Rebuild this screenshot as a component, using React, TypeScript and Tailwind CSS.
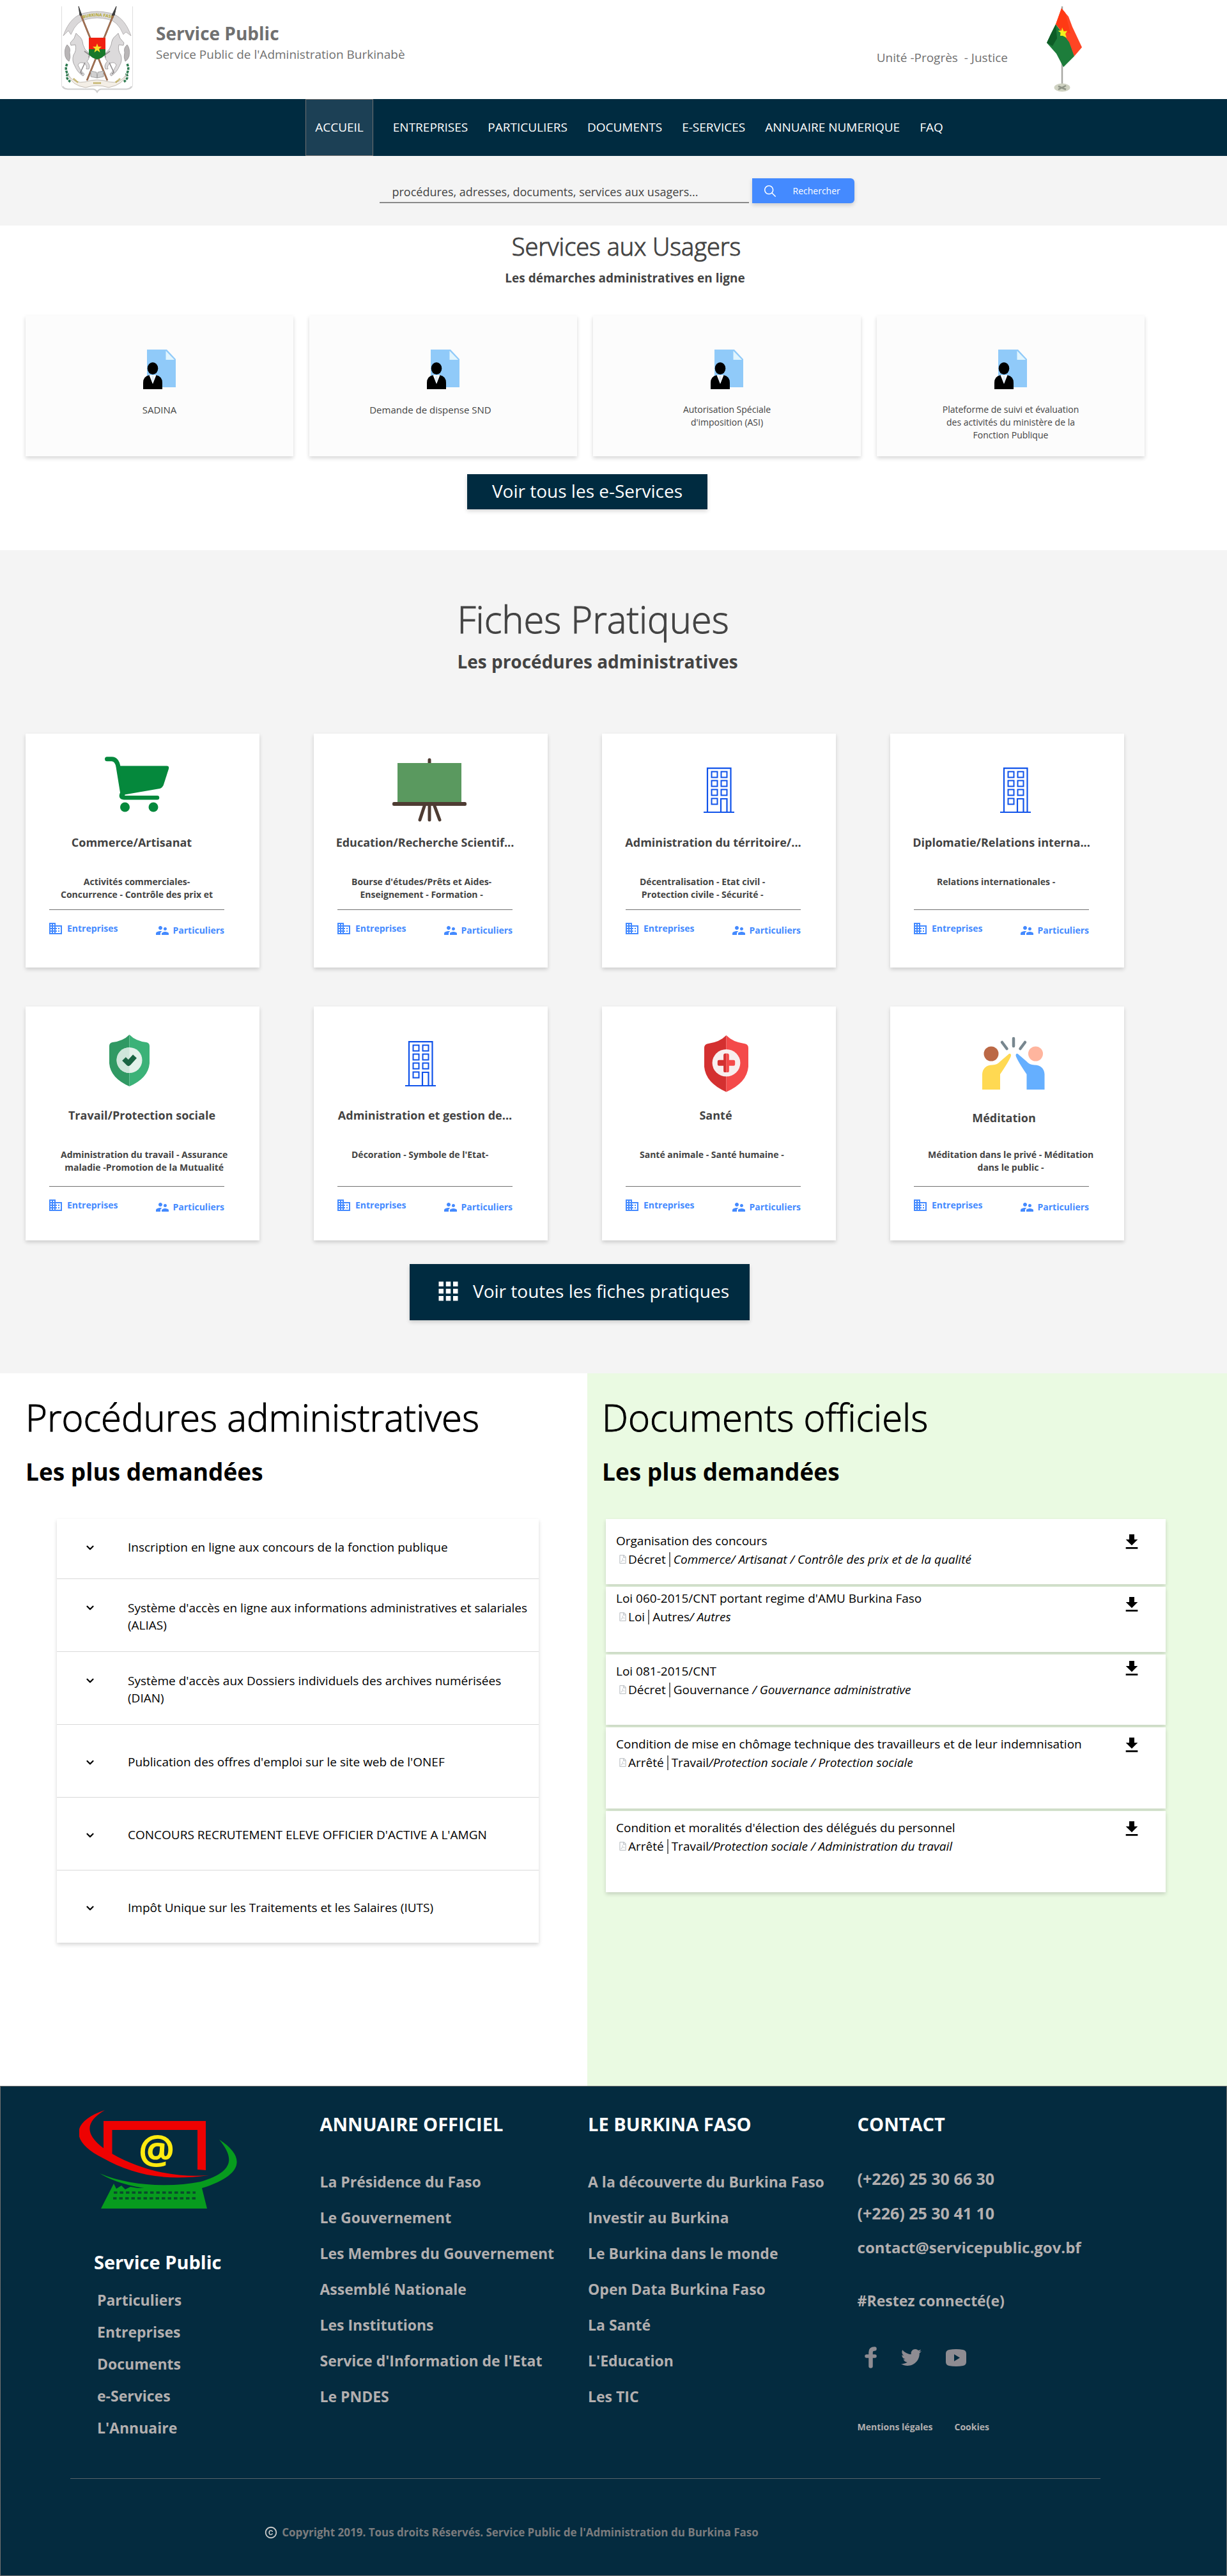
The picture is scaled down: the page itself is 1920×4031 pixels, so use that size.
import React from "react";
import { MdApps, MdBusiness, MdCopyright, MdFileDownload, MdSupervisorAccount } from "react-icons/md";
import { IoIosSearch } from "react-icons/io";
import { FaRegFilePdf, FaTwitter } from "react-icons/fa";
import { ChevronDown } from "lucide-react";

function Emblem() {
  const horse = (
    <g fill="#dcdadb" stroke="#8d8a8b" strokeWidth="0.7">
      <path d="M23 42 L27 46 Q33 50 34 60 Q36 68 42 72 Q46 80 40 86 Q46 92 43 98 L39 98 Q41 93 36 89 Q28 86 26 92 Q29 100 36 106 L34 109 Q25 103 21 93 Q16 85 19 76 Q24 69 22 60 L15 61 L14 57 L20 50 Z" />
      <path d="M37 88 L30 103 L33 106 M36 70 L44 76 L43 80" fill="none" strokeWidth="1.6" />
      <path d="M9 60 Q4 66 6 78 Q8 84 12 86 Q15 80 13 72 Q15 65 9 60 Z" fill="#b9b6b7" />
    </g>
  );
  return (
    <svg className="h-[136px] w-[112px] shrink-0" viewBox="0 0 112 136" role="img" aria-label="Armoiries du Burkina Faso">
      <path d="M0.500 0 V124 Q1 129 8 129.500 H50 Q54 130 56 135 Q58 130 62 129.500 H104 Q111 129 111.500 124 V0" fill="#fff" stroke="#dedede" />
      <path d="M2 125 Q4 129 10 129.500 H50 Q54 130 56 134 Q58 130 62 129.500 H102 Q108 129 110 125" fill="none" stroke="#cfcfcf" strokeWidth="2" />
      <path d="M3 46 Q14 14 38 10 Q56 6 74 10 Q98 14 109 46 L101 40 L97 44 Q88 22 72 20 Q56 16 40 20 Q24 22 15 44 L11 38 Z" fill="#dad8d9" stroke="#a9a6a7" strokeWidth="0.800" />
      <path id="motto" d="M34 19 Q56 12 80 19" fill="none" />
      <text fontSize="6.500" fontWeight="700" fill="#b5a82a" fontFamily="Open Sans, sans-serif">
        <textPath href="#motto">BURKINA FASO</textPath>
      </text>
      {horse}
      <g transform="translate(112 0) scale(-1 1)">{horse}</g>
      <path d="M30 12 L72 116 M82 12 L40 116" stroke="#7c4a2c" strokeWidth="2.600" />
      <path d="M30 12 L72 116 M82 12 L40 116" stroke="#d9a98a" strokeWidth="0.700" />
      <path d="M27 0 L32 14 L29 14 Z M86 0 L83 14 L79 14 Z" fill="#3c3c3c" stroke="#3c3c3c" />
      <path d="M43 49 H69 V67 H43 Z" fill="#f02010" />
      <path d="M43 67 H69 V75 Q66 80 56 83 Q46 80 43 75 Z" fill="#17782a" />
      <path d="M56 58 L57.800 63 L63 63 L59 66.500 L60.500 72 L56 68.800 L51.500 72 L53 66.500 L49 63 L54.200 63 Z" fill="#f6e02a" />
      <path d="M46 101 L55 103 L56 112 L46 110 Z M66 101 L57 103 L56 112 L66 110 Z" fill="#d0d0d0" stroke="#888" strokeWidth="0.700" />
      <path d="M9 90 Q5 98 10 106 Q6 112 14 118 M103 90 Q107 98 102 106 Q106 112 98 118" fill="none" stroke="#2d7a4f" strokeWidth="3.500" strokeDasharray="4 1.500" />
      <path d="M10 106 Q20 122 38 118 Q56 112 74 118 Q92 122 102 106 Q98 122 74 127 Q56 121 38 127 Q16 124 10 106 Z" fill="#f3eee6" stroke="#b6afa6" strokeWidth="0.800" />
      <path d="M19 113 L26 119 M50 120 H62 M85 119 L92 113" stroke="#b5a040" strokeWidth="2.400" strokeDasharray="1.500 0.600" />
    </svg>
  );
}

function Flag() {
  return (
    <svg className="h-[134px] w-[56px] shrink-0" viewBox="0 0 56 134" role="img" aria-label="Drapeau du Burkina Faso">
      <path d="M25 0 V128" stroke="#a8a8a4" strokeWidth="2.500" />
      <path d="M24 3 L35 16 L41 32 L56 64 L44 78 L27 44 L15 28 Z" fill="#ff4524" />
      <path d="M24 3 L30 10 L38 42 L27 40 L15 28 Z" fill="#ff3a14" />
      <path d="M15 28 L27 44 L36 56 L44 78 L27 95 L16 74 L1 57 L7 44 Z" fill="#1d7d3b" />
      <path d="M15 28 L17 50 L10 62 L1 57 L7 44 Z" fill="#0d5c26" />
      <path d="M25 33 L27.500 39 L33 38.500 L30 43 L32 49 L26 46 L22 46 L22.500 41 L18.500 38 L24 38 Z" fill="#f4f01c" />
      <ellipse cx="25" cy="127" rx="12.500" ry="6.500" fill="#cfd2c2" />
      <path d="M19 125 L31 130 M19 130 L31 124" stroke="#8f9487" strokeWidth="2.500" />
    </svg>
  );
}

function ServiceIcon() {
  return (
    <svg className="h-[62px] w-[51px]" viewBox="0 0 51 62" aria-hidden="true">
      <path d="M6 0 H37 L51 15 V59 H6 Z" fill="#90caf9" />
      <path d="M35.500 2 L49 16 H35.500 Z" fill="#e1f5fe" />
      <path d="M8 40 H22 L15 54 Z" fill="#fff" />
      <ellipse cx="15" cy="29.500" rx="8.300" ry="9.500" />
      <path d="M9.500 40 L15 54 L20.500 40 Q30 42 30 52 V62 H0 V52 Q0 42 9.500 40 Z" />
      <path d="M13.500 41 H16.500 L17 47 L15 51 L13 47 Z" fill="#dbe9f5" />
    </svg>
  );
}

const building = (
  <g fill="none" stroke="#0f52ea" strokeWidth="2.200">
    <path d="M0 70 H48 M6 70 V1.200 H42.500 V70 M27 70 V49 H36.500 V70" />
    <path d="M12.500 6.500 h9 v9 h-9 Z M27.500 6.500 h9 v9 h-9 Z M12.500 20.500 h9 v9 h-9 Z M27.500 20.500 h9 v9 h-9 Z M12.500 34.500 h9 v9 h-9 Z M27.500 34.500 h9 v9 h-9 Z M12.500 48.500 h9 v9 h-9 Z" strokeWidth="2" />
  </g>
);

const shieldLeft = "M31.500 0 Q22 10 5 12 Q0 13 0 18 V45 Q2 68 31.500 81 Z";
const shieldRight = "M31.500 0 Q41 10 58 12 Q63 13 63 18 V45 Q61 68 31.500 81 Z";

const ficheIcons: Record<string, React.ReactNode> = {
  cart: (
    <g fill="#05883c">
      <path d="M23.500 7.800 H31 Q39 8 41 20 L48 63" fill="none" stroke="#05883c" strokeWidth="7" strokeLinecap="round" />
      <path d="M42 18.500 H117 Q121 18.500 120 23 L112 48 Q110 53 106 54 L48 64 Z" />
      <path d="M48 60 Q43 68 50 68.200 H102" fill="none" stroke="#05883c" strokeWidth="6.500" strokeLinecap="round" />
      <circle cx="51.500" cy="83" r="7.500" />
      <circle cx="96" cy="83" r="7.500" />
    </g>
  ),
  board: (
    <g>
      <path d="M77 9 V20 M69.500 80 L62 103 M77 80 V103 M84.500 80 L93 103" stroke="#4e3c33" strokeWidth="5" strokeLinecap="round" />
      <path d="M27 14 H127 V76 H27 Z" fill="#5a995f" />
      <rect x="19" y="75" width="116" height="6" rx="2.500" fill="#4e3c33" />
    </g>
  ),
  admin: <g transform="translate(55 21)">{building}</g>,
  diplomacy: <g transform="translate(68 21)">{building}</g>,
  management: <g transform="translate(39 22)">{building}</g>,
  work: (
    <g transform="translate(27 12)">
      <path d={shieldLeft} fill="#309963" />
      <path d={shieldRight} fill="#3bb278" />
      <circle cx="31.500" cy="40" r="20" fill="#e3f1ea" />
      <path d="M31.500 20 A20 20 0 0 0 31.500 60 Z" fill="#cfe6da" />
      <path d="M23 38 L30 45 L40 34" fill="none" stroke="#1a6442" strokeWidth="8" strokeLinejoin="round" />
    </g>
  ),
  health: (
    <g transform="translate(56 13) scale(1.095)">
      <path d={shieldLeft} fill="#d43030" />
      <path d={shieldRight} fill="#f44a4a" />
      <ellipse cx="31.500" cy="39.500" rx="20" ry="19.500" fill="#f8eeee" />
      <path d="M31.500 26 V53 H29 Q27.500 53 27.500 51 V43.500 H21 Q19 43.500 19 41.500 V37.500 Q19 35.500 21 35.500 H27.500 V29 Q27.500 26 30 26 Z" fill="#d43030" />
      <path d="M31.500 26 V53 H34 Q35.500 53 35.500 51 V43.500 H42 Q44 43.500 44 41.500 V37.500 Q44 35.500 42 35.500 H35.500 V29 Q35.500 26 33 26 Z" fill="#f44a4a" />
    </g>
  ),
  mediation: (
    <g>
      <path d="M89 18 V30 M71 24 L78.500 34 M107 24 L99.500 34" stroke="#78878f" strokeWidth="4.500" strokeLinecap="round" />
      <circle cx="54" cy="42" r="11.500" fill="#bb6845" />
      <circle cx="123.500" cy="42" r="11.500" fill="#ffb59e" />
      <path d="M40 98 V74 Q41 60 56 59.500 Q64 59 68 54 L82 42 Q85 41 85 45 Q83 52 68 74 V98 Z" fill="#ffd952" />
      <path d="M137.500 98 V74 Q136.500 60 121.500 59.500 Q113.500 59 109.500 54 L95.500 42 Q92.500 41 92.500 45 Q94.500 52 109.500 74 V98 Z" fill="#65afff" />
    </g>
  ),
};

function FooterLogo() {
  return (
    <svg className="ml-[123px] h-[154px] w-[249px]" viewBox="0 0 249 154" role="img" aria-label="Service Public en ligne">
      <path d="M38 17 H198 V94 L185 93 V31 H51.500 V72 L38 62 Z" fill="#ee0202" />
      <path d="M40 0 C-14 18 -14 50 37 75 C82 100 130 112 203 102 C150 106 96 94 51 68 C8 42 6 20 40 0 Z" fill="#ee0202" />
      <path d="M219 46 C262 74 256 102 192 122 C130 130 70 122 32 99 C76 118 140 122 190 112 C244 96 242 74 219 46 Z" fill="#079b1e" />
      <path d="M54 115 L58 123 L66 118 L72 124 L80 120 L92 122 H192 L200 154 H34 Z" fill="#079b1e" />
      <path d="M54 129 H182 M53 138 H182" stroke="#0a4a2c" strokeWidth="3.500" strokeDasharray="5.500 4" />
      <text x="121" y="84" textAnchor="middle" fontSize="63" fontWeight="700" fontFamily="Open Sans, sans-serif" fill="#fdea10">@</text>
    </svg>
  );
}

const services = [
  { label: ["SADINA"], cls: "text-[15px]" },
  { label: ["Demande de dispense SND"], cls: "pr-10 text-[15px]" },
  { label: ["Autorisation Spéciale", "d'imposition (ASI)"], cls: "text-[14px]" },
  { label: ["Plateforme de suivi et évaluation", "des activités du ministère de la", "Fonction Publique"], cls: "text-[14px]" },
];

const fiches = [
  { icon: "cart", title: "Commerce/Artisanat", t: "pr-4", d: "ml-[18px]", lines: ["Activités commerciales-", "Concurrence - Contrôle des prix et"] },
  { icon: "board", title: "Education/Recherche Scientif...", t: "", d: "ml-[22px]", lines: ["Bourse d'études/Prêts et Aides-", "Enseignement - Formation -"] },
  { icon: "admin", title: "Administration du térritoire/...", t: "", d: "ml-[22px]", lines: ["Décentralisation - Etat civil -", "Protection civile - Sécurité -"] },
  { icon: "diplomacy", title: "Diplomatie/Relations interna...", t: "", d: "ml-9", lines: ["Relations internationales -"] },
  { icon: "work", title: "Travail/Protection sociale", t: "pl-4", d: "ml-[18px]", lines: ["Administration du travail - Assurance", "maladie -Promotion de la Mutualité"] },
  { icon: "management", title: "Administration et gestion de...", t: "", d: "ml-[22px]", lines: ["Décoration - Symbole de l'Etat-"] },
  { icon: "health", title: "Santé", t: "pl-2", d: "ml-[22px]", lines: ["Santé animale - Santé humaine -"] },
  { icon: "mediation", title: "Méditation", t: "pt-1 pl-2", d: "ml-[22px]", lines: ["Méditation dans le privé - Méditation", "dans le public -"] },
];

const procedures = [
  "Inscription en ligne aux concours de la fonction publique",
  "Système d'accès en ligne aux informations administratives et salariales (ALIAS)",
  "Système d'accès aux Dossiers individuels des archives numérisées (DIAN)",
  "Publication des offres d'emploi sur le site web de l'ONEF",
  "CONCOURS RECRUTEMENT ELEVE OFFICIER D'ACTIVE A L'AMGN",
  "Impôt Unique sur les Traitements et les Salaires (IUTS)",
];

const documents = [
  { title: "Organisation des concours", kind: "Décret", plain: "", it: "Commerce/ Artisanat / Contrôle des prix et de la qualité", box: "h-[102px]", text: "pt-5", dl: "pt-5" },
  { title: "Loi 060-2015/CNT portant regime d'AMU Burkina Faso", kind: "Loi", plain: "Autres", it: "/ Autres", box: "h-[102px]", text: "pt-1", dl: "pt-3" },
  { title: "Loi 081-2015/CNT", kind: "Décret", plain: "Gouvernance ", it: "/ Gouvernance administrative", box: "h-[110px]", text: "pt-3", dl: "pt-1.5" },
  { title: "Condition de mise en chômage technique des travailleurs et de leur indemnisation", kind: "Arrêté", plain: "Travail", it: "/Protection sociale / Protection sociale", box: "h-[127px]", text: "pt-3", dl: "pt-3" },
  { title: "Condition et moralités d'élection des délégués du personnel", kind: "Arrêté", plain: "Travail", it: "/Protection sociale / Administration du travail", box: "h-[127px]", text: "pt-3", dl: "pt-3" },
];

const annuaire = ["La Présidence du Faso", "Le Gouvernement", "Les Membres du Gouvernement", "Assemblé Nationale", "Les Institutions", "Service d'Information de l'Etat", "Le PNDES"];
const burkina = ["A la découverte du Burkina Faso", "Investir au Burkina", "Le Burkina dans le monde", "Open Data Burkina Faso", "La Santé", "L'Education", "Les TIC"];
const nav = ["ENTREPRISES", "PARTICULIERS", "DOCUMENTS", "E-SERVICES", "ANNUAIRE NUMERIQUE", "FAQ"];

function FooterLinks({ title, items }: { title: string; items: string[] }) {
  return (
    <nav aria-label={title} className="pt-[39px]">
      <h2 className="text-[29px] leading-10 font-bold text-white">{title}</h2>
      <ul className="mt-[42px]">
        {items.map((i) => (
          <li key={i} className="text-[23px] leading-[56px]">
            <a href="#">{i}</a>
          </li>
        ))}
      </ul>
    </nav>
  );
}

export default function App() {
  return (
    <div className="bg-white font-['Open_Sans',sans-serif] text-black">
      <header className="flex h-[155px] items-start pt-2.5 pr-[227px] pl-24">
        <Emblem />
        <div className="mt-[23px] ml-9 text-[#707070]">
          <h1 className="text-[28px] leading-[38px] font-bold">Service Public</h1>
          <p className="text-[19px] leading-7">Service Public de l'Administration Burkinabè</p>
        </div>
        <p className="mt-[66px] mr-[60px] ml-auto text-[19px] leading-7 whitespace-pre text-[#707070]">Unité -Progrès  - Justice</p>
        <Flag />
      </header>

      <nav aria-label="Navigation principale" className="flex h-[89px] items-center justify-center gap-[31px] bg-[#002b40] pl-[34px] text-[19px] text-white">
        <a href="#" aria-current="page" className="flex h-full items-center border border-[#707070] bg-[#1c4055] px-3.5">ACCUEIL</a>
        {nav.map((n) => (
          <a key={n} href="#">{n}</a>
        ))}
      </nav>

      <form role="search" onSubmit={(e) => e.preventDefault()} className="flex h-[109px] items-start justify-center gap-[5px] bg-[#f4f4f4] pt-[35px] pl-2.5">
        <input
          type="search"
          aria-label="Rechercher un service"
          placeholder="procédures, adresses, documents, services aux usagers..."
          className="h-[39px] w-[578px] border-b-2 border-[#8a8a8a] bg-transparent px-5 pt-1 text-[18px] text-[#434343] outline-none placeholder:text-[#434343] placeholder:opacity-100"
        />
        <button type="submit" className="flex h-[39px] w-40 items-center rounded-r-md bg-[#448aff] pl-4 text-[14px] text-white shadow-[0_3px_6px_rgba(0,0,0,0.16)]">
          <IoIosSearch className="mr-6 size-6" />
          Rechercher
        </button>
      </form>

      <section className="pt-2 pb-16">
        <div className="pl-10 text-center text-[#434343]">
          <h2 className="text-[38px] leading-[48px] font-light [-webkit-text-stroke:1px]">Services aux Usagers</h2>
          <p className="mt-3 pr-1 text-[19px] leading-7 font-bold">Les démarches administratives en ligne</p>
        </div>
        <div className="mt-[45px] grid grid-cols-4 gap-[25px] pr-[129px] pl-10">
          {services.map((s) => (
            <a key={s.label[0]} href="#" className="flex h-[220px] flex-col items-center bg-[#fcfcfc] pt-[53px] shadow-[0_3px_6px_rgba(0,0,0,0.16)]">
              <ServiceIcon />
              <span className={`mt-[22px] text-center leading-5 text-[#434343] ${s.cls}`}>
                {s.label.map((l) => (
                  <span key={l} className="block">{l}</span>
                ))}
              </span>
            </a>
          ))}
        </div>
        <div className="mt-7 flex justify-center pr-[82px]">
          <button type="button" className="h-[55px] w-[376px] bg-[#002b40] pb-1 text-[28px] leading-10 text-white shadow-[0_3px_6px_rgba(0,0,0,0.16)]">Voir tous les e-Services</button>
        </div>
      </section>

      <section className="bg-[#f4f4f4] pt-[72px] pb-[83px] text-[#434343]">
        <div className="flex justify-center pr-[50px]">
          <div>
            <h2 className="text-[58px] leading-[72px] font-light [-webkit-text-stroke:1px]">Fiches Pratiques</h2>
            <p className="mt-2.5 text-[28px] leading-10 font-bold">Les procédures administratives</p>
          </div>
        </div>
        <div className="mt-[93px] grid grid-cols-4 gap-x-[85px] gap-y-[61px] pr-[161px] pl-10">
          {fiches.map((f, i) => (
            <article key={f.icon} className="h-[366px] bg-white pt-8 pr-[55px] pl-[37px] shadow-[0_3px_6px_rgba(0,0,0,0.16)]">
              <svg className="mx-auto h-[110px] w-[140px]" viewBox="0 0 140 110" aria-hidden="true">{ficheIcons[f.icon]}</svg>
              <h3 className={`mt-4 flex h-6 justify-center text-[18px] leading-6 font-bold whitespace-nowrap ${f.t}`}>{f.title}</h3>
              <p className={`mt-10 h-10 w-fit text-center text-[14px] leading-5 font-bold whitespace-nowrap ${f.d}`}>
                {f.lines.map((l) => (
                  <span key={l} className="block">{l}</span>
                ))}
              </p>
              <hr className={`border-[#707070] ${i < 4 ? "mt-[13px]" : "mt-[19px]"}`} />
              <div className="mt-[17px] -ml-0.5 flex justify-between text-[14px] leading-6 font-bold text-[#448aff]">
                <a href="#" className="flex gap-1.5">
                  <MdBusiness className="size-6" />
                  Entreprises
                </a>
                <a href="#" className="flex gap-[5px] pt-[3px]">
                  <MdSupervisorAccount className="size-6" />
                  Particuliers
                </a>
              </div>
            </article>
          ))}
        </div>
        <div className="mt-[37px] flex justify-center pr-[106px]">
          <button type="button" className="flex h-[88px] w-[532px] items-center bg-[#002b40] pb-1 pl-[38px] text-[28px] text-white shadow-[0_3px_6px_rgba(0,0,0,0.16)]">
            <MdApps className="mr-4 size-[45px]" />
            Voir toutes les fiches pratiques
          </button>
        </div>
      </section>

      <div className="grid grid-cols-[919fr_1001fr]">
        <section className="pt-[33px] pr-[76px] pl-10">
          <h2 className="text-[58px] leading-[72px] font-light whitespace-nowrap [-webkit-text-stroke:1px]">Procédures administratives</h2>
          <p className="mt-[25px] text-[37px] leading-[48px] font-bold">Les plus demandées</p>
          <ul className="mt-[50px] ml-[49px] shadow-[0_3px_6px_rgba(0,0,0,0.16)]">
            {procedures.map((p, i) => (
              <li key={p} className={i === 0 ? "h-[93px]" : "h-[114px] border-t border-[#d9d9d9]"}>
                <button type="button" aria-expanded="false" className={`flex size-full items-center pr-3 pl-[43px] text-left text-[19px] leading-[27px] ${i === 0 ? "pb-1" : "pt-1"}`}>
                  <span className="flex items-start">
                    <span className="mr-[50px] flex h-[27px] items-center">
                      <ChevronDown className="size-[18px]" strokeWidth={3} />
                    </span>
                    <span>{p}</span>
                  </span>
                </button>
              </li>
            ))}
          </ul>
        </section>

        <section className="bg-[#eafae2] pt-[33px] pr-24 pb-[303px] pl-[23px]">
          <h2 className="text-[58px] leading-[72px] font-light [-webkit-text-stroke:1px]">Documents officiels</h2>
          <p className="mt-[25px] text-[37px] leading-[48px] font-bold">Les plus demandées</p>
          <ul className="mt-[50px] ml-1.5 flex flex-col gap-1">
            {documents.map((d) => (
              <li key={d.title} className={`flex items-start justify-between bg-white pr-[37px] pl-4 shadow-[0_3px_6px_rgba(0,0,0,0.16)] ${d.box}`}>
                <div className={`text-[19px] ${d.text}`}>
                  <h3 className="leading-7">{d.title}</h3>
                  <p className="flex items-center leading-[30px] whitespace-pre">
                    <FaRegFilePdf className="mr-0.5 ml-1 h-[14px] w-[13px] text-[#c4c8cc]" />
                    {d.kind}
                    <span className="mx-[5px] h-[23px] w-0.5 bg-[#707070]" />
                    {d.plain}
                    <em>{d.it}</em>
                  </p>
                </div>
                <button type="button" aria-label={`Télécharger ${d.title}`} className={d.dl}>
                  <MdFileDownload className="size-8" />
                </button>
              </li>
            ))}
          </ul>
        </section>
      </div>

      <footer className="border border-[#707070] bg-[#042b3f] pb-[55px] font-bold text-[#b3afaf]">
        <div className="grid grid-cols-[500fr_420fr_422fr_578fr]">
          <div className="pt-[37px]">
            <FooterLogo />
            <h2 className="mt-16 ml-[146px] text-[29px] leading-10 text-white">Service Public</h2>
            <ul className="mt-3.5 ml-[151px] text-[23px] leading-[50px]">
              {["Particuliers", "Entreprises", "Documents", "e-Services", "L'Annuaire"].map((l) => (
                <li key={l}>
                  <a href="#">{l}</a>
                </li>
              ))}
            </ul>
          </div>
          <FooterLinks title="ANNUAIRE OFFICIEL" items={annuaire} />
          <FooterLinks title="LE BURKINA FASO" items={burkina} />
          <div className="pt-[39px]">
            <h2 className="text-[29px] leading-10 text-white">CONTACT</h2>
            <address className="mt-[38px] flex flex-col text-[25px] leading-[54px] not-italic">
              <a href="tel:+22625306630">(+226) 25 30 66 30</a>
              <a href="tel:+22625304110">(+226) 25 30 41 10</a>
              <a href="mailto:contact@servicepublic.gov.bf" className="text-[24px]">contact@servicepublic.gov.bf</a>
            </address>
            <p className="mt-[29px] text-[23px] leading-[54px]">#Restez connecté(e)</p>
            <div className="mt-[45px] ml-[11px] flex h-[34px] items-center gap-[38px] text-[#8e8c92]">
              <a href="#" aria-label="Facebook">
                <svg className="h-[34px] w-[19px]" viewBox="0 0 19 34" fill="none" stroke="currentColor" strokeWidth="6.500" strokeLinecap="round">
                  <path d="M9.500 30.500 V9 Q9.500 3.500 15.500 3.500" />
                  <path d="M3 15 H16" strokeWidth="5.500" />
                </svg>
              </a>
              <a href="#" aria-label="Twitter">
                <FaTwitter className="size-8" />
              </a>
              <a href="#" aria-label="YouTube">
                <svg className="h-[27px] w-8" viewBox="0 0 32 27">
                  <path fillRule="evenodd" fill="currentColor" d="M5 1 Q16 -1 27 1 Q32 2 32 7 V20 Q32 25 27 26 Q16 28 5 26 Q0 25 0 20 V7 Q0 2 5 1 Z M13 8 V19 L22 13.500 Z" />
                </svg>
              </a>
            </div>
            <div className="mt-[82px] flex gap-[34px] text-[14px] leading-5">
              <a href="#">Mentions légales</a>
              <a href="#">Cookies</a>
            </div>
          </div>
        </div>
        <hr className="mt-[54px] mr-[197px] ml-[109px] border-[#59636a]" />
        <p className="mt-[72px] flex items-center justify-center gap-1.5 pr-80 text-[17px] leading-6 text-[#7b7b7d]">
          <MdCopyright className="size-[22px] text-[#c9c9c9]" />
          Copyright 2019. Tous droits Réservés. Service Public de l'Administration du Burkina Faso
        </p>
      </footer>
    </div>
  );
}
